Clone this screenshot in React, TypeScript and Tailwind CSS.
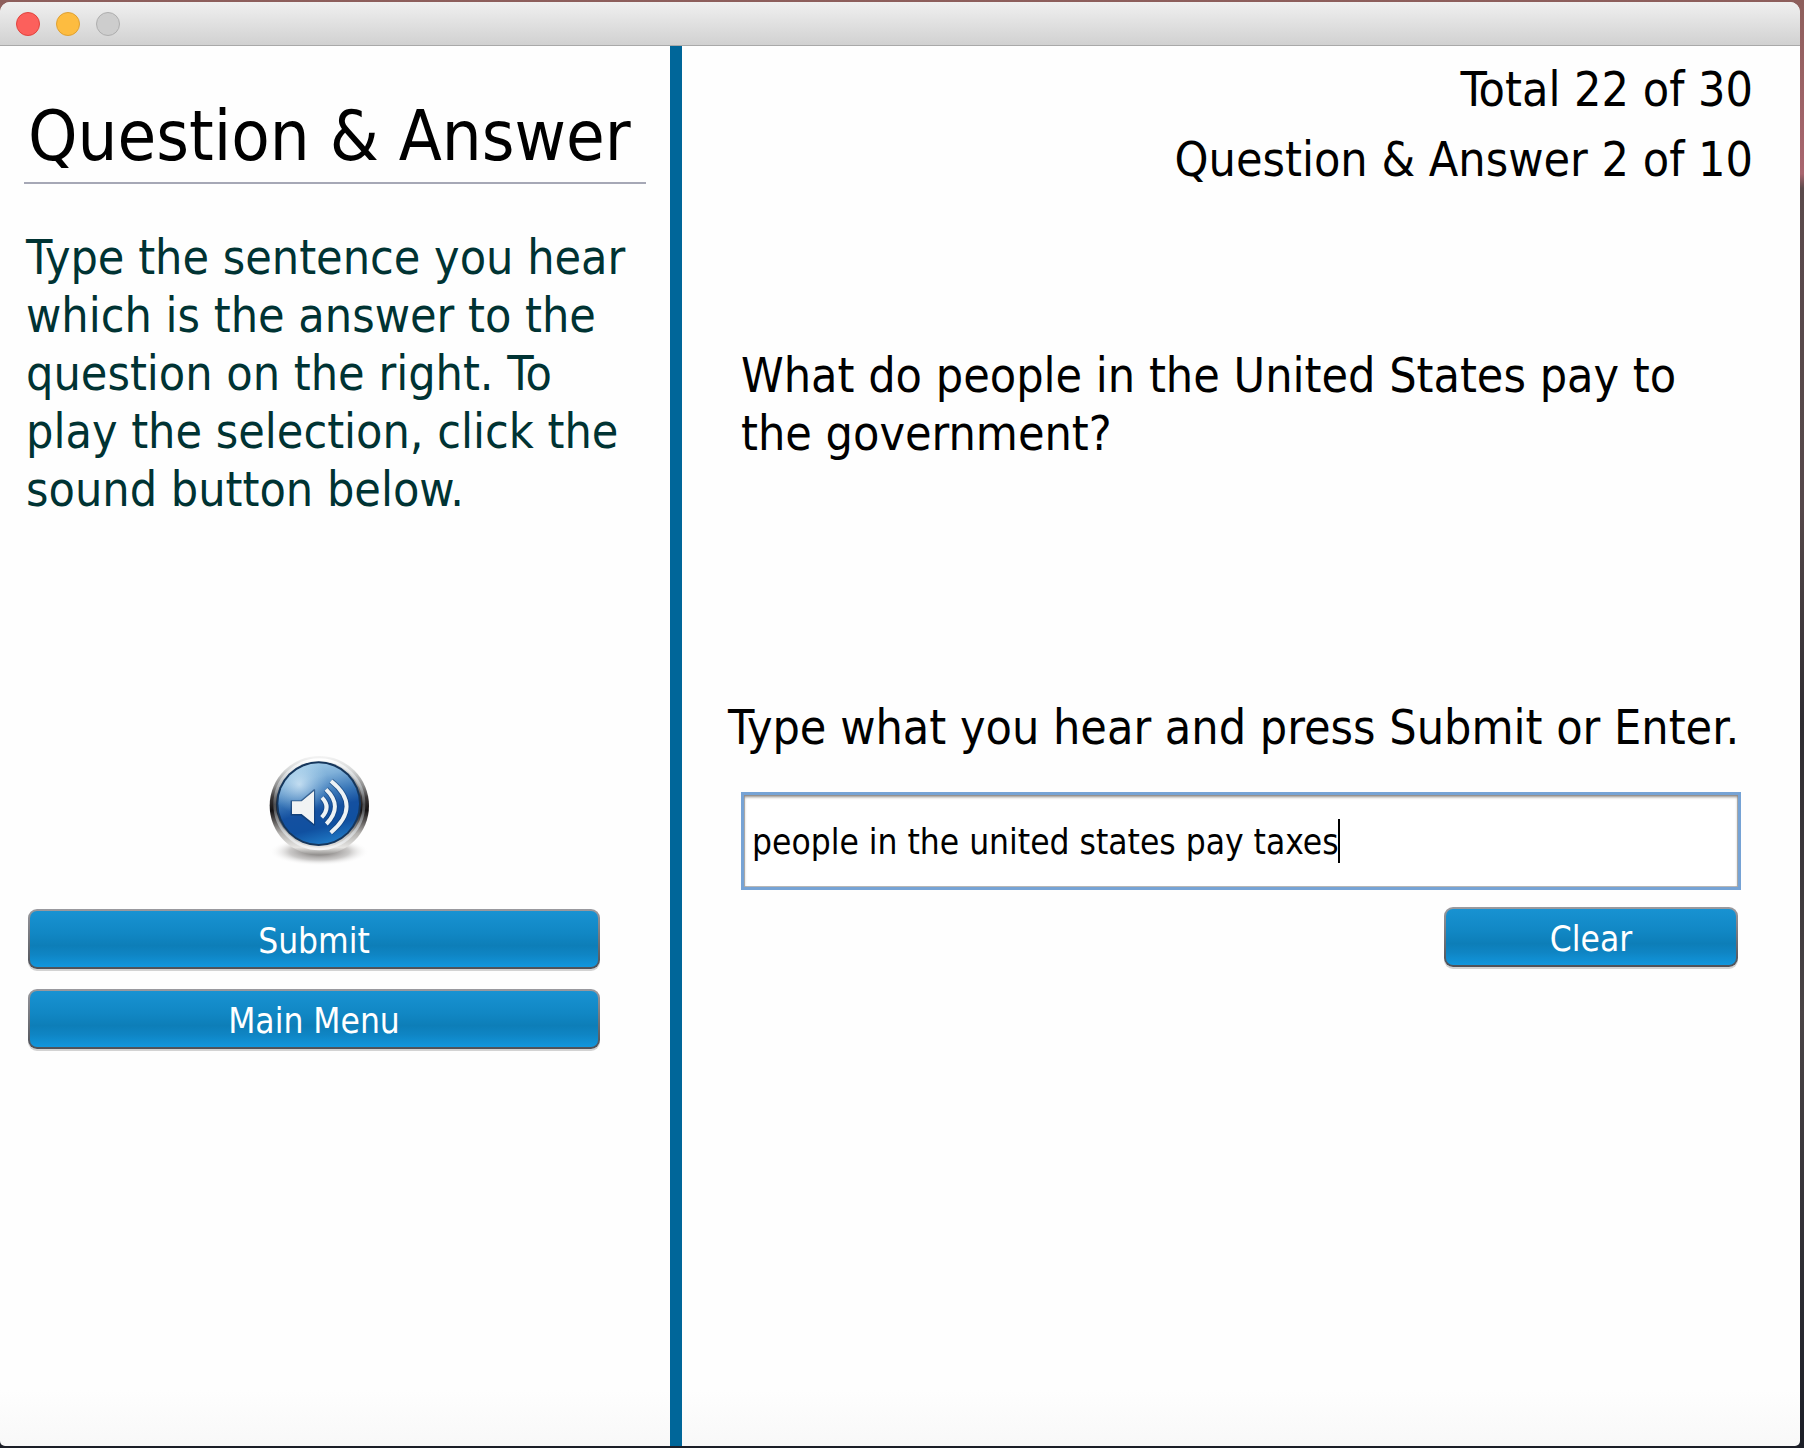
import { useState } from "react";
import type { ReactNode } from "react";

function TitleBar() {
  return (
    <header className="flex h-11 shrink-0 items-center gap-4 border-b border-[#a9a9a9] bg-linear-to-b from-[#f0f0f0] to-[#d1d1d1] px-4">
      <button type="button" aria-label="Close" className="size-6 rounded-full border border-[#e0443e] bg-[#fc605c]" />
      <button type="button" aria-label="Minimize" className="size-6 rounded-full border border-[#dea033] bg-[#fdbc40]" />
      <button type="button" aria-label="Zoom" disabled className="size-6 rounded-full border border-[#aeaeae] bg-[#cdcdcd]" />
    </header>
  );
}

function GlossyButton({ children, className = "", onClick }: { children: ReactNode; className?: string; onClick?: () => void }) {
  return (
    <button
      type="button"
      onClick={onClick}
      className={`h-15 rounded-[9px] bg-linear-to-b from-[#9a9a9f] to-[#4e5158] p-0.5 text-[35px] leading-[56px] text-white shadow-[0_2px_0_#d3d3d3] ${className}`}
    >
      <span className="block h-full rounded-[7px] bg-[linear-gradient(to_bottom,#1892d2_0%,#1187c4_40%,#0d7eb8_62%,#0f85c4_78%,#1196dd_100%)] pt-0.5">
        {children}
      </span>
    </button>
  );
}

function SpeakerIcon() {
  return (
    <svg viewBox="0 0 420 420" className="size-[140px]" aria-hidden="true">
      <defs>
        <linearGradient id="ring" x1="0" y1="0" x2="0" y2="1">
          <stop offset="0" stopColor="#f4f4f4" />
          <stop offset="0.14" stopColor="#d6d8d8" />
          <stop offset="0.3" stopColor="#8d8d8d" />
          <stop offset="0.42" stopColor="#3a3636" />
          <stop offset="0.55" stopColor="#141112" />
          <stop offset="0.66" stopColor="#5d5a59" />
          <stop offset="0.78" stopColor="#b5b3b0" />
          <stop offset="0.92" stopColor="#e6e5e3" />
          <stop offset="1" stopColor="#8c8a88" />
        </linearGradient>
        <linearGradient id="bevel" x1="0" y1="0" x2="0" y2="1">
          <stop offset="0" stopColor="#ffffff" />
          <stop offset="0.5" stopColor="#a9b4bd" stopOpacity="0.3" />
          <stop offset="1" stopColor="#f5f5f5" />
        </linearGradient>
        <linearGradient id="face" x1="0.3" y1="0" x2="0.55" y2="1">
          <stop offset="0" stopColor="#a3cde9" />
          <stop offset="0.2" stopColor="#7fb0d9" />
          <stop offset="0.42" stopColor="#3a77b8" />
          <stop offset="0.6" stopColor="#1450a0" />
          <stop offset="0.8" stopColor="#1050a0" />
          <stop offset="1" stopColor="#1f78c4" />
        </linearGradient>
        <radialGradient id="shine" cx="0.26" cy="0.26" r="0.36">
          <stop offset="0" stopColor="#e4f4fd" stopOpacity="0.7" />
          <stop offset="1" stopColor="#b4daf0" stopOpacity="0" />
        </radialGradient>
        <radialGradient id="ground">
          <stop offset="0" stopColor="#55504e" stopOpacity="0.9" />
          <stop offset="0.6" stopColor="#8b8886" stopOpacity="0.45" />
          <stop offset="1" stopColor="#ffffff" stopOpacity="0" />
        </radialGradient>
      </defs>
      <ellipse cx="211" cy="332" rx="150" ry="42" fill="url(#ground)" />
      <circle cx="211" cy="194" r="149" fill="url(#ring)" />
      <circle cx="211" cy="190" r="134" fill="none" stroke="url(#bevel)" strokeWidth="8" />
      <circle cx="209" cy="188" r="127" fill="#15365c" />
      <circle cx="209" cy="188" r="121" fill="url(#face)" />
      <circle cx="209" cy="188" r="121" fill="url(#shine)" />
      <path
        d="M127 180H157L196 147V252L157 222H127Z"
        fill="#123a6b"
        fillOpacity="0.5"
        stroke="#123a6b"
        strokeOpacity="0.55"
        strokeWidth="5"
        strokeLinejoin="round"
      />
      <path d="M129 181H158L195 150V249L158 219H129Z" fill="#f1f3f4" />
      <g fill="none">
        <g stroke="#133e75" strokeOpacity="0.6" strokeWidth="17">
          <path d="M219 170Q247 199 218 229" />
          <path d="M231 145Q284 196 232 249" />
          <path d="M246 120Q340 196 245 275" />
        </g>
        <g stroke="#edf2f5" strokeWidth="12">
          <path d="M219 170Q247 199 218 229" />
          <path d="M231 145Q284 196 232 249" />
          <path d="M246 120Q340 196 245 275" />
        </g>
      </g>
    </svg>
  );
}

export default function App() {
  const [answer, setAnswer] = useState("people in the united states pay taxes");

  return (
    <div className="flex min-h-screen flex-col bg-[linear-gradient(to_bottom,#8d5f5c_0%,#a9666f_12%,#5b4a4c_13%,#55484a_35%,#2e2c31_50%,#4a4446_70%,#1b1e27_100%)] pt-0.5 pr-1 pb-0.5 font-['DejaVu_Sans_Condensed','DejaVu_Sans',sans-serif] text-[48px] leading-[58px] text-black">
      <div className="flex grow flex-col overflow-hidden rounded-t-[10px] rounded-b-[5px] bg-[linear-gradient(to_top,#f8f8f8_0px,#fefefe_56px)]">
        <TitleBar />
        <div className="grid grow grid-cols-[670fr_12px_1118fr]">
          <section className="flex flex-col px-6 pt-[58px]">
            <h1 className="h-16 overflow-hidden pl-1 text-[70px] leading-[64px] whitespace-nowrap">Question &amp; Answer</h1>
            <hr className="mt-3.5 border-t-2 border-[#a6a8b6]" />
            <p className="mt-11 pl-0.5 text-[#003333]">
              Type the sentence you hear which is the answer to the question on the right. To play the selection, click the
              sound button below.
            </p>
            <button type="button" aria-label="Play sound" className="mt-[223px] mr-8 self-center rounded-full">
              <SpeakerIcon />
            </button>
            <div className="mt-7 mr-[46px] flex flex-col gap-5 pl-1">
              <GlossyButton>Submit</GlossyButton>
              <GlossyButton>Main Menu</GlossyButton>
            </div>
          </section>
          <div className="bg-[#006699]" />
          <section className="flex flex-col pt-2 pr-[59px] pl-[46px]">
            <div className="-mr-3 text-right leading-[70px]">
              <p>Total 22 of 30</p>
              <p>Question &amp; Answer 2 of 10</p>
            </div>
            <p className="mt-[152px] mr-12 pl-[13px]">What do people in the United States pay to the government?</p>
            <label htmlFor="answer" className="mt-[236px] whitespace-nowrap">
              Type what you hear and press Submit or Enter.
            </label>
            <div className="mt-9 ml-[13px] flex flex-col">
              <div className="relative flex">
                <input
                  id="answer"
                  type="text"
                  value={answer}
                  onChange={(e) => setAnswer(e.target.value)}
                  className="peer h-[98px] grow border-3 border-[#76a3d5] bg-white px-2 pt-0.5 text-[35px] leading-[44px] shadow-[inset_0_2px_3px_#8f8a86,inset_0_0_0_1px_#b9b9b9] outline-none"
                />
                <span className="pointer-events-none absolute top-[27px] left-[597px] h-11 w-0.5 bg-black peer-focus:hidden" />
              </div>
              <GlossyButton className="mt-[17px] mr-[3px] w-[294px] self-end" onClick={() => setAnswer("")}>
                Clear
              </GlossyButton>
            </div>
          </section>
        </div>
      </div>
    </div>
  );
}
